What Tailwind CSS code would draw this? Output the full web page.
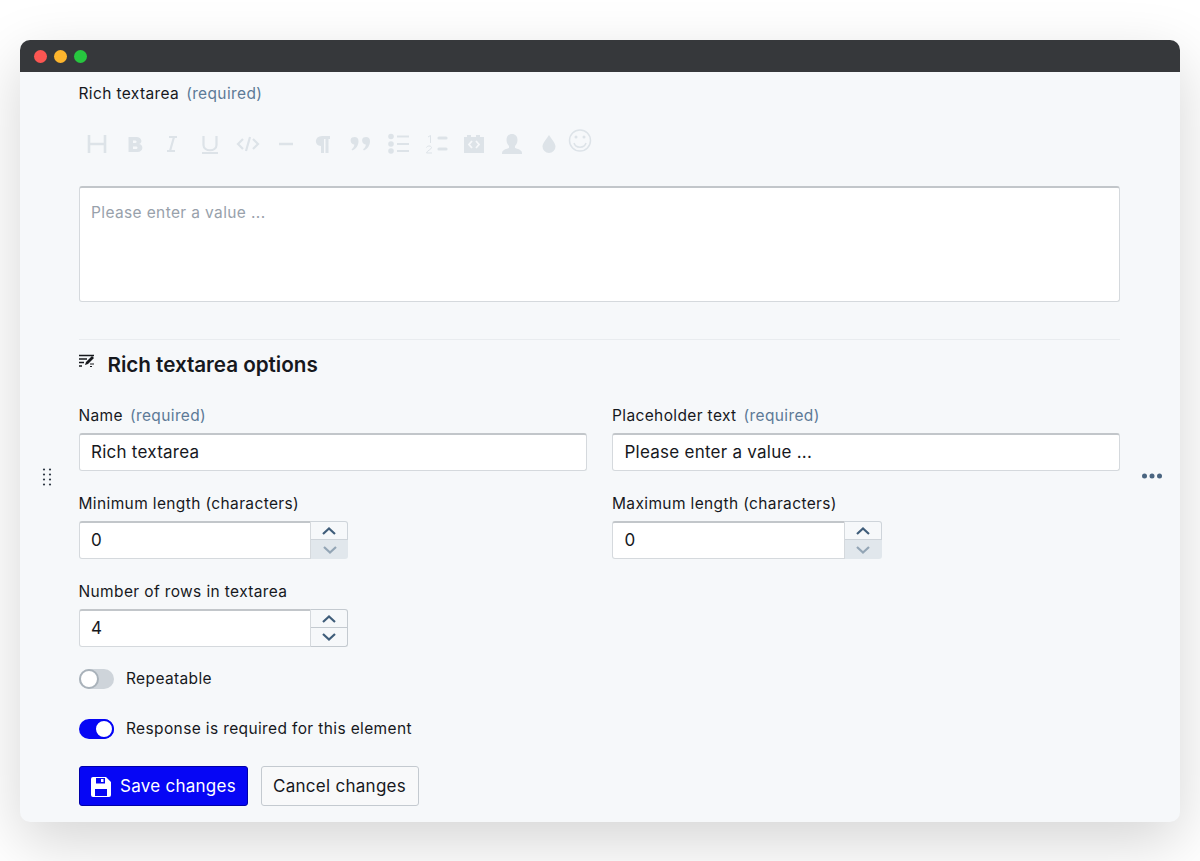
<!DOCTYPE html>
<html lang="en">
<head>
<meta charset="utf-8">
<title>Rich textarea</title>
<script src="https://cdn.jsdelivr.net/npm/@tailwindcss/browser@4"></script>
</head>
<body class="bg-white h-[861px] overflow-hidden font-['Inter',sans-serif] text-[15.5px] tracking-[0.37px] text-[#16181d]">
<div class="pt-10 px-5">
  <div class="relative w-[1160px] h-[782px] rounded-[10px] bg-[#f6f8fa] shadow-[0_20px_60px_rgba(0,0,0,0.17)] overflow-hidden">
    <div class="h-8 bg-[#36383b] flex items-center gap-[7px] pl-[14px]">
      <span class="w-[13px] h-[13px] rounded-full bg-[#fc5652]"></span>
      <span class="w-[13px] h-[13px] rounded-full bg-[#fdb52d]"></span>
      <span class="w-[13px] h-[13px] rounded-full bg-[#27c63f]"></span>
    </div>

    <!-- drag handle -->
    <svg class="absolute left-[22px] top-[428px]" width="10" height="18" viewBox="0 0 10 18" fill="#2f3a46"><circle cx="2" cy="1.500" r="1.100"/><circle cx="8" cy="1.500" r="1.100"/><circle cx="2" cy="6.500" r="1.100"/><circle cx="8" cy="6.500" r="1.100"/><circle cx="2" cy="11.500" r="1.100"/><circle cx="8" cy="11.500" r="1.100"/><circle cx="2" cy="16.500" r="1.100"/><circle cx="8" cy="16.500" r="1.100"/></svg>
    <!-- more menu -->
    <svg class="absolute left-[1121px] top-[433px]" width="22" height="6" viewBox="0 0 22 6" fill="#4a6580"><circle cx="3.500" cy="3" r="2.500"/><circle cx="11" cy="3" r="2.500"/><circle cx="18.500" cy="3" r="2.500"/></svg>

    <div class="pl-[58.5px] pr-[60px]">
      <div class="h-11 flex items-center"><span>Rich textarea</span><span class="ml-[7px] text-[#5d7a97]">(required)</span></div>

      <!-- toolbar -->
      <div class="h-[70px] relative">
        <svg class="absolute left-0 top-0" width="530" height="60" viewBox="79 116 530 60" fill="#dde3e8" stroke="none">
          <path d="M89 135v18M105 135v18M89 144h16" stroke="#dde3e8" stroke-width="2.600" fill="none"/>
          <path d="M128.500 137h8c5.500 0 6.500 6.200 2.500 7 5 .8 4.500 8-1.500 8h-9zM133 140.500v2.500h2.500c1.500 0 1.500-2.500 0-2.500zM133 146.500v2.500h3c2 0 2-2.500 0-2.500z" fill-rule="evenodd"/>
          <path d="M169 137h8M167 151h8M174 137l-4 14" stroke="#dde3e8" stroke-width="2.200" fill="none"/>
          <path d="M203.500 136v9c0 7 13 7 13 0v-9M202 153h16" stroke="#dde3e8" stroke-width="2.200" fill="none"/>
          <path d="M243 139l-5 5 5 5M253 139l5 5-5 5M250 137l-4 14" stroke="#dde3e8" stroke-width="2.200" fill="none"/>
          <path d="M279 144h14" stroke="#dde3e8" stroke-width="2.600" fill="none"/>
          <path d="M322 136h8v3h-1.500v14h-3v-14h-1.500v14h-3v-7c-7 0-7-10 1-10z"/>
          <path d="M352 137.500c3.500-1.500 6.500 0 6.500 3.500 0 4.500-2.500 8-6 9.500l-1-1.200c2-1.500 2.800-3 2.800-4.800-3.800 0-4.800-5.500-2.300-7zM363.500 137.500c3.500-1.500 6.500 0 6.500 3.500 0 4.500-2.500 8-6 9.500l-1-1.200c2-1.500 2.800-3 2.800-4.800-3.800 0-4.800-5.500-2.300-7z"/>
          <circle cx="391" cy="136.500" r="2.800"/><circle cx="391" cy="144" r="2.800"/><circle cx="391" cy="151" r="2.800"/>
          <path d="M397 136.500h12M397 144h12M397 151h12" stroke="#dde3e8" stroke-width="2.200" fill="none"/>
          <path d="M439 138h7M439 149h7" stroke="#dde3e8" stroke-width="3.200" stroke-linecap="round" fill="none"/>
          <path d="M428 137l2.500-1.500v7.500M426.500 147.500c1-2 4.500-2 5 0 0 2-4.500 3-5 5.500h5.500" stroke="#dde3e8" stroke-width="1" fill="none"/>
          <path d="M464 137h3v-2h4v2h5v-2h4v2h4v16h-20z"/>
          <path d="M472 141l-3 3.500 3 3.500M476 141l3 3.500-3 3.500" stroke="#f6f8fa" stroke-width="1.800" fill="none"/>
          <path d="M512 134c3.500 0 5.500 2.500 5.500 6 0 3-1.500 5-2.500 6v2c2 1 7 1.500 7 5v1h-20v-1c0-3.500 5-4 7-5v-2c-1-1-2.500-3-2.500-6 0-3.500 2-6 5.500-6z"/>
          <path d="M549 135c2 3.500 6.500 8 6.500 11.500a6.500 6.500 0 0 1-13 0c0-3.500 4.500-8 6.500-11.500z"/>
          <circle cx="580" cy="140.500" r="10.500" fill="none" stroke="#dde3e8" stroke-width="1.500"/>
          <circle cx="576" cy="137" r="1.500"/><circle cx="584" cy="137" r="1.500"/>
          <path d="M574 143c1.500 5.500 10.500 5.500 12 0" fill="none" stroke="#dde3e8" stroke-width="1.500"/>
        </svg>
      </div>

      <div class="h-[116px] bg-white rounded-[3px] border border-[#d5d9dd] border-t-[#c2c6ca] border-t-2 px-[11.5px] pt-[13px] text-[#98a1ab]">Please enter a value ...</div>

      <div class="mt-[37px] border-t border-[#e9ecef] h-[60px] pb-[9px] flex items-center">
        <svg class="mr-[13px] mb-2" width="16" height="14" viewBox="0 0 16 14" fill="none" stroke="#16181d" stroke-width="1.400"><path d="M0 1.500h15M0 5h8M0 8.500h5M0 12h3"/><path d="M6 11l1-3 6-6 2 2-6 6z" fill="#16181d" stroke="none"/><path d="M11 10h4M11 12.500h2" stroke-width="1.200"/></svg>
        <h2 class="text-[20.7px] leading-none font-semibold tracking-[-0.05px]">Rich textarea options</h2>
      </div>

      <div class="grid grid-cols-[508.5px_508px] gap-x-[25px]">
        <div class="h-[88px]">
          <div class="h-[34px] flex items-center pb-[1px]">Name<span class="ml-[7px] text-[#5d7a97]">(required)</span></div>
          <div class="h-[38px] bg-white rounded-[3px] border border-[#d5d9dd] border-t-[#c2c6ca] border-t-2 px-[11.5px] flex items-center text-[17px] tracking-[0.25px]">Rich textarea</div>
        </div>
        <div class="h-[88px]">
          <div class="h-[34px] flex items-center pb-[1px]">Placeholder text<span class="ml-[7px] text-[#5d7a97]">(required)</span></div>
          <div class="h-[38px] bg-white rounded-[3px] border border-[#d5d9dd] border-t-[#c2c6ca] border-t-2 px-[11.5px] flex items-center text-[17px] tracking-[0.25px]">Please enter a value ...</div>
        </div>
        <div class="h-[88px]">
          <div class="h-[34px] flex items-center pb-[1px]">Minimum length (characters)</div>
          <div class="w-[269.5px] h-[38px] flex">
            <div class="flex-1 bg-white rounded-l-[3px] border border-[#d5d9dd] border-t-[#c2c6ca] border-t-2 px-[11.5px] flex items-center text-[17px]">0</div>
            <div class="w-[37px] flex flex-col">
              <div class="h-[19px] rounded-tr-[3px] border-t border-r border-b border-[#ced4da] flex items-center justify-center"><svg width="14" height="8" viewBox="0 0 14 8" fill="none" stroke="#3f5d7a" stroke-width="2.200"><path d="M1 7l6-5.500 6 5.500"/></svg></div>
              <div class="h-[19px] rounded-br-[3px] bg-[#e1e7ec] flex items-center justify-center"><svg width="14" height="8" viewBox="0 0 14 8" fill="none" stroke="#93a5b5" stroke-width="2.200"><path d="M1 1l6 5.500 6-5.500"/></svg></div>
            </div>
          </div>
        </div>
        <div class="h-[88px]">
          <div class="h-[34px] flex items-center pb-[1px]">Maximum length (characters)</div>
          <div class="w-[269.5px] h-[38px] flex">
            <div class="flex-1 bg-white rounded-l-[3px] border border-[#d5d9dd] border-t-[#c2c6ca] border-t-2 px-[11.5px] flex items-center text-[17px]">0</div>
            <div class="w-[37px] flex flex-col">
              <div class="h-[19px] rounded-tr-[3px] border-t border-r border-b border-[#ced4da] flex items-center justify-center"><svg width="14" height="8" viewBox="0 0 14 8" fill="none" stroke="#3f5d7a" stroke-width="2.200"><path d="M1 7l6-5.500 6 5.500"/></svg></div>
              <div class="h-[19px] rounded-br-[3px] bg-[#e1e7ec] flex items-center justify-center"><svg width="14" height="8" viewBox="0 0 14 8" fill="none" stroke="#93a5b5" stroke-width="2.200"><path d="M1 1l6 5.500 6-5.500"/></svg></div>
            </div>
          </div>
        </div>
        <div class="h-[88px]">
          <div class="h-[34px] flex items-center pb-[1px]">Number of rows in textarea</div>
          <div class="w-[269.5px] h-[38px] flex">
            <div class="flex-1 bg-white rounded-l-[3px] border border-[#d5d9dd] border-t-[#c2c6ca] border-t-2 px-[11.5px] flex items-center text-[17px]">4</div>
            <div class="w-[37px] flex flex-col">
              <div class="h-[19px] rounded-tr-[3px] border-t border-r border-b border-[#c4cad0] flex items-center justify-center"><svg width="14" height="8" viewBox="0 0 14 8" fill="none" stroke="#3f5d7a" stroke-width="2.200"><path d="M1 7l6-5.500 6 5.500"/></svg></div>
              <div class="h-[19px] rounded-br-[3px] border-r border-b border-[#c4cad0] flex items-center justify-center"><svg width="14" height="8" viewBox="0 0 14 8" fill="none" stroke="#3f5d7a" stroke-width="2.200"><path d="M1 1l6 5.500 6-5.500"/></svg></div>
            </div>
          </div>
        </div>
      </div>

      <div class="-mt-[9px] h-[50px] flex items-center gap-3">
        <span class="w-[35.5px] h-5 rounded-full bg-[#ced4da] flex"><span class="w-5 h-5 rounded-full bg-white border-2 border-[#a9b2ba]"></span></span>
        <span>Repeatable</span>
      </div>
      <div class="h-[50px] flex items-center gap-3">
        <span class="w-[35.5px] h-5 rounded-full bg-[#0606f5] flex justify-end"><span class="w-5 h-5 rounded-full bg-white border-2 border-[#0606f5]"></span></span>
        <span>Response is required for this element</span>
      </div>
      <div class="mt-3 flex gap-[13px]">
        <button class="w-[169px] h-10 rounded-[3px] bg-[#0606f5] border border-[#0000a8] text-white text-[17px] tracking-[0.25px] flex items-center justify-center gap-[8px] pt-[1px]">
          <svg width="22" height="22" viewBox="0 0 22 22" fill="#fff"><path fill-rule="evenodd" d="M1 3a2 2 0 0 1 2-2h13l5 5v13a2 2 0 0 1-2 2H3a2 2 0 0 1-2-2zM6 2v5.500h9V2zM11 3h2.500v3H11zM5 13v7h12v-7z"/></svg>
          Save changes
        </button>
        <button class="w-[158px] h-10 rounded-[3px] bg-[#f8f9fa] border border-[#c4cad0] text-[17px] tracking-[0.28px] pt-[1px]">Cancel changes</button>
      </div>
    </div>
  </div>
</div>
</body>
</html>
